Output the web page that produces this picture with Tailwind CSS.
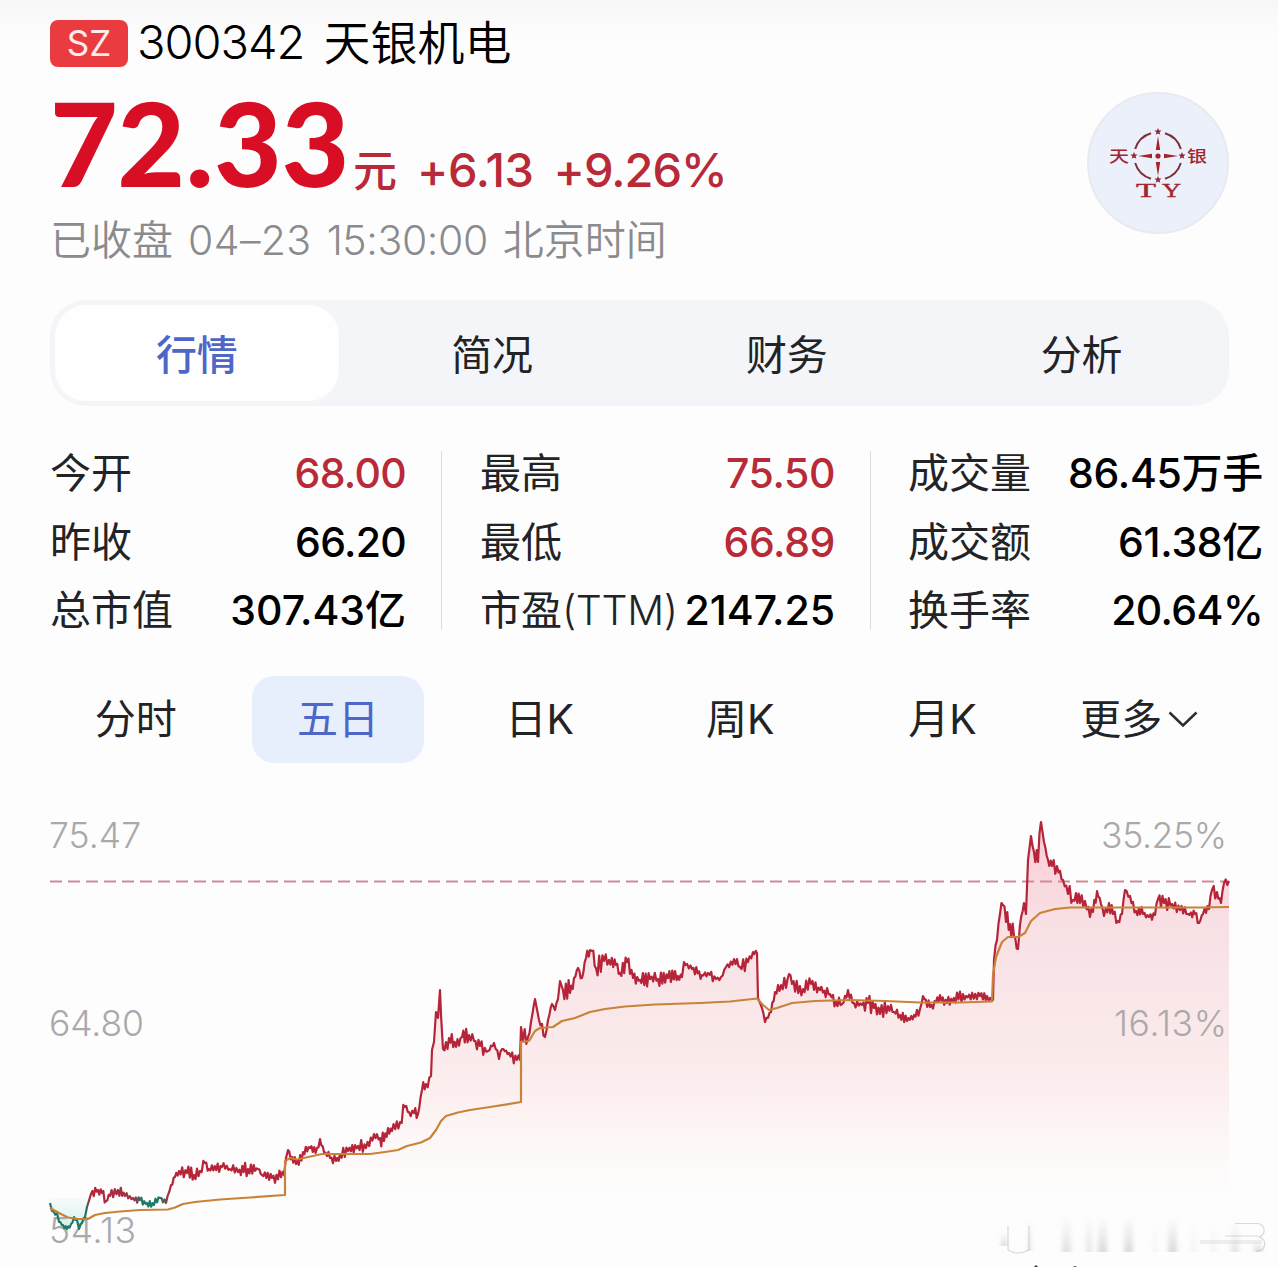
<!DOCTYPE html>
<html lang="zh-CN">
<head>
  <meta charset="UTF-8">
  <title>天银机电 300342</title>
  <meta name="viewport" content="width=device-width, initial-scale=1.0">
  <script src="https://cdn.jsdelivr.net/npm/@tailwindcss/browser@4"></script>
</head>
<body class="bg-[#fdfdfd] font-['Inter','Noto_Sans_CJK_SC',sans-serif] text-black">
  <main class="w-[1278px] h-[1267px] overflow-hidden bg-linear-to-b from-[#f7f7f8] to-[#fdfdfd] to-[40px]">

    <header class="flex justify-between pl-[50px] pr-[49px]">
      <div>
        <div class="flex items-center h-[82px] pt-px text-[47px] leading-none whitespace-pre font-[350]">
          <span class="flex items-center justify-center w-[78px] h-[47px] mt-[4px] rounded-lg bg-[#ea3c40] text-[#ffeceb] text-[35px] font-normal">SZ</span>
          <span class="ml-[9px] tracking-[-1px]">300342</span>
          <span class="ml-[19px] pt-[2px]">天银机电</span>
        </div>
        <div class="flex items-baseline h-[128px] leading-[120px] text-[#b82a38] font-medium">
          <span class="font-['Lato',sans-serif] font-black text-[117px] tracking-[-0.5px] text-[#d80f24] w-[303px]">72<span class="mx-[1px]">.</span>33</span>
          <span class="text-[44px]">元</span>
          <span class="text-[47px] ml-[20px] tracking-[-0.4px]">+6.13</span>
          <span class="text-[47px] ml-[20px] tracking-[-1px]">+9.26%</span>
        </div>
        <div class="flex items-center h-[60px] text-[41px] leading-none text-[#8a8b8e] font-[350] gap-[15px]">
          <span>已收盘</span>
          <span class="tracking-[0.4px]">04–23</span>
          <span class="tracking-[-0.4px]">15:30:00</span>
          <span>北京时间</span>
        </div>
      </div>

      <svg class="w-[142px] h-[142px] mt-[92px]" viewBox="0 0 142 142">
        <circle cx="71" cy="71" r="70" fill="#ebf0fa" stroke="#e8eaef" stroke-width="2"/>
        <g fill="none" stroke="#7d2f3d" stroke-width="2">
          <path d="M78 41.3A23.5 23.5 0 0 1 93.8 57"/>
          <path d="M93.8 71A23.5 23.5 0 0 1 78 86.7"/>
          <path d="M64 86.7A23.5 23.5 0 0 1 48.2 71"/>
          <path d="M48.2 57A23.5 23.5 0 0 1 64 41.3"/>
        </g>
        <g fill="#a5242c">
          <path d="M71 44l2.2 14h-4.4zM71 84l2.2-14h-4.4zM51 64l14-2.2v4.4zM91 64l-14-2.2v4.4z"/>
          <circle cx="71" cy="64" r="2.6"/>
        </g>
        <g fill="#8f2a36">
          <path id="star" d="M71 36l1.1 2.5 2.5.1-2 1.7.7 2.5-2.3-1.4-2.3 1.4.7-2.5-2-1.7 2.5-.1z"/>
          <use href="#star" y="48"/>
          <use href="#star" x="-24" y="24"/>
          <use href="#star" x="24" y="24"/>
        </g>
        <g fill="#a2262d" font-weight="500">
          <text x="22" y="71" font-size="20" transform="matrix(1 0 0 .78 0 15)" font-family="Noto Sans CJK SC, sans-serif">天</text>
          <text x="100" y="71" font-size="20" transform="matrix(1 0 0 .78 0 15)" font-family="Noto Sans CJK SC, sans-serif">银</text>
          <text x="49" y="105" font-size="19" font-weight="400" stroke="#a2262d" stroke-width=".4" textLength="20" lengthAdjust="spacingAndGlyphs" font-family="Liberation Serif, serif">T</text>
          <text x="75" y="105" font-size="19" font-weight="400" stroke="#a2262d" stroke-width=".4" textLength="19" lengthAdjust="spacingAndGlyphs" font-family="Liberation Serif, serif">Y</text>
        </g>
      </svg>
    </header>

    <nav class="grid grid-cols-4 w-[1179px] h-[106px] mt-[30px] ml-[50px] rounded-[36px] bg-[#f3f5f9] text-[41px] text-[#222326]">
      <a class="flex items-center justify-center m-[5px] mr-[6px] pt-[5px] rounded-[31px] bg-[#fefefe] text-[#4e66c8] font-medium">行情</a>
      <a class="flex items-center justify-center pt-[5px]">简况</a>
      <a class="flex items-center justify-center pt-[5px]">财务</a>
      <a class="flex items-center justify-center pt-[5px]">分析</a>
    </nav>

    <section class="flex mt-[33px] ml-[50px] h-[206px] text-[41px] leading-[68.5px] text-[#222326]">
      <dl class="w-[356px]">
        <div class="flex justify-between"><dt>今开</dt><dd class="font-medium tracking-[-0.7px] text-[#b82a38]">68.00</dd></div>
        <div class="flex justify-between"><dt>昨收</dt><dd class="font-medium tracking-[-0.7px] text-black">66.20</dd></div>
        <div class="flex justify-between"><dt>总市值</dt><dd class="font-medium text-black">307.43亿</dd></div>
      </dl>
      <div class="w-px h-[179px] mt-[12px] ml-[35px] mr-[38px] bg-[#dcdcde]"></div>
      <dl class="w-[355px]">
        <div class="flex justify-between"><dt>最高</dt><dd class="font-medium tracking-[-0.4px] text-[#b82a38]">75.50</dd></div>
        <div class="flex justify-between"><dt>最低</dt><dd class="font-medium tracking-[-0.4px] text-[#b82a38]">66.89</dd></div>
        <div class="flex justify-between whitespace-nowrap"><dt>市盈<span class="tracking-[-0.4px] font-[350]">(TTM)</span></dt><dd class="font-medium text-black">2147.25</dd></div>
      </dl>
      <div class="w-px h-[179px] mt-[12px] ml-[35px] mr-[37px] bg-[#dcdcde]"></div>
      <dl class="w-[355px]">
        <div class="flex justify-between"><dt>成交量</dt><dd class="font-medium tracking-[-0.3px] text-black">86.45万手</dd></div>
        <div class="flex justify-between"><dt>成交额</dt><dd class="font-medium tracking-[-0.3px] text-black">61.38亿</dd></div>
        <div class="flex justify-between"><dt>换手率</dt><dd class="font-medium tracking-[-0.6px] text-black">20.64%</dd></div>
      </dl>
    </section>

    <nav class="grid grid-cols-6 w-[1204px] ml-[37px] mt-[31px] h-[87px] text-[41px] text-[#222326]">
      <a class="flex items-center justify-center pr-[3px]">分时</a>
      <a class="flex items-center justify-center mx-[14px] rounded-[22px] bg-[#e7effd] text-[#4e66c8]">五日</a>
      <a class="flex items-center justify-center pl-[2px]">日K</a>
      <a class="flex items-center justify-center pl-[2px]">周K</a>
      <a class="flex items-center justify-center pl-[5px]">月K</a>
      <a class="flex items-center justify-center pr-[3px]">更多
        <svg class="w-[30px] h-[18px] ml-[6px]" viewBox="0 0 30 18" fill="none" stroke="#2c2d30" stroke-width="2.5"><path d="M1.5 1.5L15 14.5 28.5 1.5"/></svg>
      </a>
    </nav>

    <!-- chart units are page pixels, so the series below read straight off the grid -->
    <svg class="block w-[1278px] h-[504px]" viewBox="0 763 1278 504">
      <defs>
        <linearGradient id="area" gradientUnits="userSpaceOnUse" x1="0" y1="822" x2="0" y2="1200">
          <stop offset="0" stop-color="#f9ccd3"/>
          <stop offset=".25" stop-color="#f8dfe3"/>
          <stop offset=".45" stop-color="#f9e6e8"/>
          <stop offset=".6" stop-color="#fbeaeb"/>
          <stop offset=".72" stop-color="#fcefef"/>
          <stop offset=".84" stop-color="#fdf7f7"/>
          <stop offset="1" stop-color="#fdfdfd"/>
        </linearGradient>
        <linearGradient id="down" gradientUnits="userSpaceOnUse" x1="0" y1="1195" x2="0" y2="1228">
          <stop offset="0" stop-color="#eaf7f5" stop-opacity=".3"/>
          <stop offset="1" stop-color="#d0efeb"/>
        </linearGradient>
        <linearGradient id="trend" gradientUnits="userSpaceOnUse" x1="50" y1="0" x2="250" y2="0">
          <stop offset=".18" stop-color="#1e7a66"/>
          <stop offset=".2" stop-color="#b52439"/>
          <stop offset=".42" stop-color="#9c3547"/>
          <stop offset=".46" stop-color="#1e7a66"/>
          <stop offset=".55" stop-color="#1e7a66"/>
          <stop offset=".6" stop-color="#b52439"/>
        </linearGradient>
        <linearGradient id="streak" x1="0" y1="0" x2="0" y2="1">
          <stop offset="0" stop-color="#bbb" stop-opacity="0"/>
          <stop offset="1" stop-color="#aaa" stop-opacity=".75"/>
        </linearGradient>
        <filter id="soft" x="-5%" width="110%"><feGaussianBlur stdDeviation="2 0"/></filter>
      </defs>

      <path id="fill" fill="url(#area)"/>
      <path d="M50 1198H87L85 1217 79 1226 74 1217 67 1228 59 1221 50 1210z" fill="url(#down)"/>
      <path d="M50 881.5H1229" stroke="#d08b98" stroke-width="2" stroke-dasharray="12 6"/>

      <g fill="#a9a9ac" font-size="35.5" font-weight="350">
        <text x="49" y="848" textLength="92">75.47</text>
        <text x="49" y="1036" textLength="95">64.80</text>
        <text x="49" y="1243" textLength="87">54.13</text>
        <text x="1101" y="848" textLength="126">35.25%</text>
        <text x="1114" y="1036" textLength="113">16.13%</text>
      </g>

      <path id="price" fill="none" stroke="url(#trend)" stroke-width="2.2" stroke-linejoin="round"/>
      <path fill="none" stroke="#c98338" stroke-width="2.2" stroke-linejoin="round" d="M50 1208L59 1213 68 1217.5 78 1219 88 1219 95 1215 105 1213 120 1211.5 140 1210 168 1209.5 175 1207.5 183 1204 195 1202 220 1199.5 250 1197.5 285 1195V1161L290 1158 297 1159.5 306 1157.5 322 1154 345 1154 370 1154 385 1152 398 1150 407 1146 421 1142.5 430 1138 436 1130 441 1121 446 1116 458 1112.5 470 1110 490 1107 521 1102V1042L529 1041 535 1031 540 1028 553 1027 562 1021 575 1018 590 1012 605 1009 625 1006.5 655 1004.5 700 1003 730 1001.5 757 998.5 763 1005 769 1010 777 1008 792 1003 815 1001 850 1000 885 1001 920 1002.5 960 1002.5 992 1001.5 993 975 996 957 1002 942 1008 937 1018 937 1025 933 1031 921 1040 913 1055 909 1070 907.5H1200L1229 907"/>

      <!-- account tag faded into the corner -->
      <g filter="url(#soft)" fill="url(#streak)" opacity=".55">
        <rect x="1001" y="1232" width="6" height="14"/>
        <rect x="1028" y="1217" width="3" height="34"/>
        <rect x="1062" y="1216" width="9" height="36" opacity=".8"/>
        <rect x="1086" y="1216" width="6" height="36" opacity=".7"/>
        <rect x="1098" y="1216" width="9" height="36"/>
        <rect x="1124" y="1216" width="9" height="36"/>
        <rect x="1153" y="1220" width="4" height="32" opacity=".3"/>
        <rect x="1168" y="1216" width="9" height="36"/>
        <rect x="1191" y="1220" width="5" height="32" opacity=".3"/>
        <rect x="1211" y="1220" width="5" height="32" opacity=".3"/>
        <rect x="1231" y="1220" width="8" height="32" opacity=".7"/>
        <rect x="1254" y="1240" width="8" height="12"/>
      </g>
      <g fill="none" stroke="#c9c9c9" stroke-width="1.2">
        <path d="M1008 1226V1250Q1018 1256 1029 1250V1226" opacity=".7"/>
        <path d="M1235 1223.5H1258Q1265 1225 1264 1232 1263 1236 1259 1237 1267 1240 1264 1247 1262 1251 1256 1251M1225 1236H1258" opacity=".7"/>
        <path d="M1200 1242H1262" stroke-width="4" opacity=".3"/>
      </g>
      <path d="M1034 1267l2-2 2 2zM1073 1267l2-1 2 1z" fill="#333"/>
    </svg>
  </main>

  <script>
    // x, y, wiggle
    const keys = [
      [50,1203,1],[52,1211,1],[57,1213,1],[59,1222,1],[63,1225,1],[67,1229,1],[71,1224,1],[74,1217,1],[77,1220,1],[79,1229,1],[82,1223,1],[85,1217,0],[87,1207,0],[91,1194,2],
      [98,1190,2],[102,1193,2],[106,1201,2],[110,1196,2],[118,1190,2],[125,1196,1.5],[133,1198,1.5],[140,1200,1.5],[147,1203,2],[154,1205,2],[160,1198,1],[166,1203,1],[171,1185,2],[175,1177,2],[179,1171,3],
      [187,1173,3],[194,1175,3],[200,1171,2],[205,1163,2],[209,1169,2],[222,1167,2],[230,1169,2],[238,1172,3],[248,1169,2],[258,1169,2],[262,1175,2],[272,1178,2.5],[284,1175,1],[286,1158,1],[288,1150,2],
      [292,1157,2],[296,1164,2.5],[303,1152,2],[310,1148,2.5],[317,1148,2],[320,1139,1],[324,1152,2],[330,1158,2],[336,1161,2],[340,1154,2],[348,1151,2],[358,1146,3],[366,1148,2],[374,1134,2.5],[380,1138,3],[384,1141,2],[388,1128,2],[392,1131,3],[400,1122,3],[405,1107,2],[409,1112,3],[414,1113,3],[418,1114,1],[422,1090,3],[426,1084,3],[431,1076,2],[432,1050,3],[434,1042,3],[436,1012,6],[438,1018,3],[440,990,0],[441,1015,5],[443,1049,5],[446,1042,6],[449,1038,4],
      [456,1047,3],[462,1037,3],[469,1035,2],[474,1041,3],[480,1046,3],[488,1051,2.5],[494,1043,2],[499,1059,1],[502,1049,1],[509,1053,2.5],[517,1060,2.5],[520,1060,0],[521,1027,1],[523,1040,5],[528,1037,3],[531,1022,1],[535,999,0],[539,1020,2],[545,1037,3],[548,1020,1],[552,1004,1],[555,1010,3],[558,999,3],[560,981,0],[563,990,5],[570,993,5],[574,978,2],[578,968,3],[582,978,3],[586,958,2],[590,950,3],[592,951,3],
      [596,968,4],[604,961,4],[609,960,3],[616,965,2],[620,973,3],[627,962,3],[633,978,2],[640,980,3],[650,979,3],[658,979,3],[668,978,3],[678,976,3],[682,977,1],[684,962,1],[692,969,2],[702,975,2.5],[708,973,2],[716,979,1],[721,977,1],[726,967,2],[734,959,2],[740,967,3],[748,962,1.5],[753,952,1],[757,953,0],[758,998,0],[762,1008,3],[765,1022,1],[771,1012,3],[775,992,2],[781,985,4],[786,988,4],[789,974,2],[792,984,3],
      [803,989,3],[811,984,2],[820,990,2],[830,994,3],[836,1001,2],[842,1004,3],[848,990,3],[854,1003,3],[862,1005,4],[868,1003,4],[874,1008,3],[880,1014,3],[888,1006,2],[894,1012,2],[900,1015,3],[907,1021,3],[914,1015,3],[920,1009,2],[923,996,2],[930,1007,2],[936,1002,2],[940,995,2],[947,1003,3],[954,998,2.5],[966,996,1.5],[980,996,1.5],[990,998,1],[993,1000,0],
      [994,960,2],[997,940,5],[1000,914,3],[1003,905,4],[1006,922,5],[1010,924,4],[1014,936,5],[1018,949,2],[1020,925,2],[1024,903,2],[1026,914,2],[1028,860,0],[1031,836,1],[1034,852,4],[1038,862,4],[1041,822,0],[1044,842,1],[1048,860,3],[1052,866,4],[1057,866,2],[1063,880,2],[1068,894,5],[1073,900,5],[1076,893,4],[1080,903,3],[1085,901,3],[1090,917,4],[1093,912,3],[1097,891,2],[1101,904,3],[1104,916,3],[1109,903,3],[1113,914,4],[1118,921,3],[1122,914,3],[1125,890,2],[1130,896,3],[1136,911,3],[1143,914,2],[1149,917,3],[1155,915,2],[1158,899,3],[1164,903,3],[1172,904,2],[1180,910,2],[1188,914,1.5],[1195,914,2],[1199,923,1],[1203,914,2],[1209,909,2],[1212,890,3],[1217,892,3],[1221,903,1],[1224,883,2],[1229,881,0]
    ];

    const pts = [];
    let seed = 7;
    function rnd() {
      seed = (seed * 16807) % 2147483647;
      return seed / 2147483647;
    }
    for (let i = 0; i < keys.length - 1; i++) {
      const [x0, y0, w] = keys[i];
      const [x1, y1] = keys[i + 1];
      const n = Math.max(1, Math.round((x1 - x0) / 1.5));
      for (let k = 0; k < n; k++) {
        const t = k / n;
        const side = pts.length % 2 ? 1 : -1;
        const off = k === 0 ? 0 : side * w * (0.3 + rnd() * 2.2);
        pts.push((x0 + (x1 - x0) * t).toFixed(1) + ' ' + (y0 + (y1 - y0) * t + off).toFixed(1));
      }
    }
    pts.push('1229 881');

    const line = 'M' + pts.join('L');
    document.getElementById('price').setAttribute('d', line);
    document.getElementById('fill').setAttribute('d', line + 'V1200H50Z');
  </script>
</body>
</html>
